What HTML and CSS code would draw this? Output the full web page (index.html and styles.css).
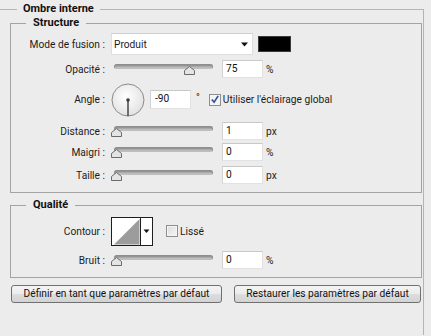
FILE: index.html
```html
<!DOCTYPE html>
<html lang="fr">
<head>
<meta charset="utf-8">
<title>Ombre interne</title>
<link rel="stylesheet" href="styles.css">
</head>
<body>
<fieldset class="group outer">
  <legend class="legend legend-outer">Ombre interne</legend>

  <fieldset class="group sub structure">
    <legend class="legend legend-sub">Structure</legend>

    <div class="row row-mode">
      <span class="label">Mode de fusion :</span>
      <div class="select">
        <span class="select-text">Produit</span>
        <svg class="select-arrow" width="7" height="5" viewBox="0 0 7 5"><path d="M0 0.5H7L3.5 4.5Z" fill="#111"/></svg>
      </div>
      <div class="swatch"></div>
    </div>

    <div class="row row-opacity">
      <span class="label">Opacité :</span>
      <div class="slider" style="--v:0.75">
        <div class="track"></div>
        <svg class="thumb" width="11" height="9" viewBox="0 0 11 9"><path d="M5.5 0.5L10.5 4.5V8.5H0.5V4.5Z" fill="#e4e4e4" stroke="#6b6b6b"/></svg>
      </div>
      <div class="field">75</div>
      <span class="unit">%</span>
    </div>

    <div class="row row-angle">
      <span class="label">Angle :</span>
      <svg class="dial" width="34" height="34" viewBox="0 0 34 34">
        <defs>
          <radialGradient id="dialg" cx="0.45" cy="0.4" r="0.6">
            <stop offset="0" stop-color="#ffffff"/>
            <stop offset="1" stop-color="#e2e2e2"/>
          </radialGradient>
        </defs>
        <circle cx="17" cy="17" r="16" fill="url(#dialg)" stroke="#8c8c8c"/>
        <line x1="17" y1="17" x2="17" y2="33" stroke="#3a3a3a" stroke-width="1.4"/>
        <circle cx="17" cy="17" r="1.8" fill="#3a3a3a"/>
      </svg>
      <div class="field field-angle">-90</div>
      <span class="deg">°</span>
      <span class="check checked">
        <svg width="11" height="11" viewBox="0 0 11 11"><path d="M2 5.5L4.5 8.5L9 1.5" fill="none" stroke="#2b4f9e" stroke-width="1.8"/></svg>
      </span>
      <span class="check-label">Utiliser l'éclairage global</span>
    </div>

    <div class="row row-distance">
      <span class="label">Distance :</span>
      <div class="slider" style="--v:0">
        <div class="track"></div>
        <svg class="thumb" width="11" height="9" viewBox="0 0 11 9"><path d="M5.5 0.5L10.5 4.5V8.5H0.5V4.5Z" fill="#e4e4e4" stroke="#6b6b6b"/></svg>
      </div>
      <div class="field">1</div>
      <span class="unit">px</span>
    </div>

    <div class="row row-choke">
      <span class="label">Maigri :</span>
      <div class="slider" style="--v:0">
        <div class="track"></div>
        <svg class="thumb" width="11" height="9" viewBox="0 0 11 9"><path d="M5.5 0.5L10.5 4.5V8.5H0.5V4.5Z" fill="#e4e4e4" stroke="#6b6b6b"/></svg>
      </div>
      <div class="field">0</div>
      <span class="unit">%</span>
    </div>

    <div class="row row-size">
      <span class="label">Taille :</span>
      <div class="slider" style="--v:0">
        <div class="track"></div>
        <svg class="thumb" width="11" height="9" viewBox="0 0 11 9"><path d="M5.5 0.5L10.5 4.5V8.5H0.5V4.5Z" fill="#e4e4e4" stroke="#6b6b6b"/></svg>
      </div>
      <div class="field">0</div>
      <span class="unit">px</span>
    </div>
  </fieldset>

  <fieldset class="group sub quality">
    <legend class="legend legend-sub">Qualité</legend>

    <div class="row row-contour">
      <span class="label">Contour :</span>
      <svg class="contour" width="42" height="29" viewBox="0 0 42 29">
        <rect x="0.5" y="0.5" width="41" height="28" fill="#ffffff" stroke="#1e1e1e"/>
        <path d="M3 27.5L28.5 2V27.5Z" fill="#9c9c9c"/>
        <line x1="29.5" y1="0.5" x2="29.5" y2="28.5" stroke="#1e1e1e"/>
        <path d="M32.5 12.5H38.5L35.5 16Z" fill="#111"/>
      </svg>
      <span class="check"></span>
      <span class="check-label">Lissé</span>
    </div>

    <div class="row row-noise">
      <span class="label">Bruit :</span>
      <div class="slider" style="--v:0">
        <div class="track"></div>
        <svg class="thumb" width="11" height="9" viewBox="0 0 11 9"><path d="M5.5 0.5L10.5 4.5V8.5H0.5V4.5Z" fill="#e4e4e4" stroke="#6b6b6b"/></svg>
      </div>
      <div class="field">0</div>
      <span class="unit">%</span>
    </div>
  </fieldset>

  <div class="buttons">
    <button class="btn btn-default">Définir en tant que paramètres par défaut</button>
    <button class="btn btn-reset">Restaurer les paramètres par défaut</button>
  </div>
</fieldset>
</body>
</html>
```

FILE: styles.css
```css
* { box-sizing: border-box; }

html, body {
  margin: 0;
  padding: 0;
  background: #ececec;
  overflow: hidden;
}

body {
  width: 431px;
  height: 336px;
  font-family: Roboto, "Liberation Sans", sans-serif;
  font-size: 10.2px;
  color: #1c1c1c;
}

.group {
  margin: 0;
  padding: 0;
  border: 1px solid #a3a3a3;
  min-width: 0;
}

.outer {
  margin: 2px 0 0 -4px;
  width: 428px;
  padding: 0 1px 32px 13px;
  border-color: #b4b4b4;
  border-bottom-width: 0;
}

.legend {
  font-size: 11px;
  font-weight: bold;
  line-height: 14px;
  height: 14px;
  color: #111;
}

.legend-outer {
  margin-left: 7px;
  padding: 0 6px;
}

.legend-sub {
  margin-left: 15px;
  padding: 0 7px;
}

.structure {
  padding: 2px 0 7px 0;
}

.quality {
  margin-top: 5px;
  padding: 5px 0 8px 0;
}

.row {
  display: flex;
  align-items: center;
}

.label {
  width: 94px;
  margin-right: 6px;
  text-align: right;
  white-space: nowrap;
}

.row-mode { height: 24px; }
.row-opacity { height: 26px; }
.row-angle { height: 35px; }
.row-distance { height: 20px; margin-top: 4px; }
.row-choke { height: 20px; margin-top: 1px; }
.row-size { height: 20px; margin-top: 3px; }
.row-contour { height: 28px; }
.row-noise { height: 18px; margin-top: 6px; }

/* select */
.select {
  width: 142px;
  height: 22px;
  background: #ffffff;
  border: 1px solid #dedede;
  border-top-color: #cfcfcf;
  display: flex;
  align-items: center;
  justify-content: space-between;
  padding: 0 4px 0 2px;
}

.select-arrow { display: block; }

.swatch {
  width: 33px;
  height: 16px;
  margin-left: 5px;
  background: #000;
  border: 1px solid #3a3a3a;
}

/* slider */
.slider {
  position: relative;
  width: 102px;
  height: 14px;
  margin-right: 9px;
}

.track {
  margin: 2px 0 0 3px;
  height: 5px;
  border-radius: 3px;
  background: linear-gradient(#8a8a8a, #b0b0b0 60%, #c8c8c8);
  border: 1px solid #8e8e8e;
  border-bottom-color: #bdbdbd;
}

.thumb {
  position: absolute;
  top: 4px;
  left: calc(var(--v) * 97px);
  display: block;
}

/* fields */
.field {
  width: 41px;
  height: 18px;
  background: #ffffff;
  border: 1px solid #e2e2e2;
  border-top-color: #c8c8c8;
  border-left-color: #d2d2d2;
  padding: 0 0 0 3px;
  line-height: 16px;
  color: #111;
}

.field-angle {
  height: 19px;
  margin-left: 5px;
  padding-left: 4px;
}

.unit {
  margin-left: 3px;
}

.dial { display: block; margin-left: 0; }

.deg {
  margin-left: 5px;
  align-self: flex-start;
  margin-top: 10px;
}

.check {
  width: 12px;
  height: 12px;
  border: 1px solid #8e8f8f;
  background: linear-gradient(135deg, #dcdcdc, #f6f6f6);
  box-shadow: inset 0 0 0 1px #f4f4f4;
  display: flex;
  align-items: center;
  justify-content: center;
}

.row-angle .check { margin-left: 9px; }

.check.checked {
  background: #f4f4f4;
  box-shadow: none;
}

.check-label {
  margin-left: 2px;
  white-space: nowrap;
}

.contour { display: block; }

.row-contour .check { margin-left: 13px; }

/* buttons */
.buttons {
  display: flex;
  gap: 12px;
  margin: 7px 0 0 1px;
}

.btn {
  height: 18px;
  padding: 0;
  font-family: inherit;
  font-size: 10.2px;
  color: #111;
  background: linear-gradient(#f4f4f4, #ebebeb 50%, #dddddd 51%, #d3d3d3);
  border: 1px solid #707070;
  border-radius: 3px;
  line-height: 16px;
}

.btn-default { width: 211px; }
.btn-reset { width: 187px; }
```
